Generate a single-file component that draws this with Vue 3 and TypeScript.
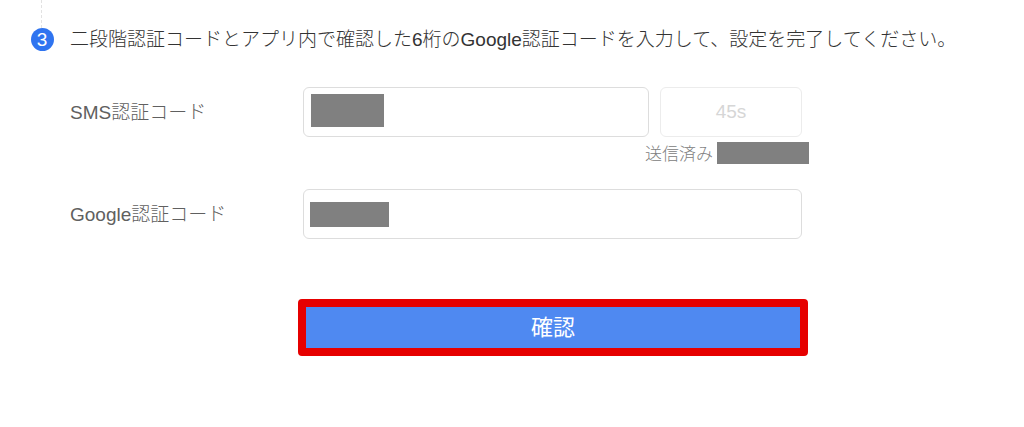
<script setup lang="ts">
import { ref } from 'vue'

const smsCode = ref('')
const googleCode = ref('')
const secondsLeft = ref(45)
</script>

<template>
  <main class="step">
    <div class="rail">
      <span class="rail-line"></span>
      <span class="badge">3</span>
    </div>
    <div class="content">
      <h2 class="title">二段階認証コードとアプリ内で確認した6桁のGoogle認証コードを入力して、設定を完了してください。</h2>
      <form class="form" @submit.prevent>
        <div class="row">
          <label class="label" for="sms-code">SMS認証コード</label>
          <div class="control">
            <div class="inline">
              <div class="field">
                <input id="sms-code" v-model="smsCode" class="input" type="text" autocomplete="off" />
                <span class="mask mask-sms"></span>
              </div>
              <button class="resend" type="button" disabled>{{ secondsLeft }}s</button>
            </div>
            <p class="note">送信済み<span class="note-mask"></span></p>
          </div>
        </div>
        <div class="row">
          <label class="label" for="google-code">Google認証コード</label>
          <div class="control field">
            <input id="google-code" v-model="googleCode" class="input" type="text" autocomplete="off" />
            <span class="mask mask-google"></span>
          </div>
        </div>
        <button class="submit" type="submit">確認</button>
      </form>
    </div>
  </main>
</template>

<style>
body {
  margin: 0;
  background: #fff;
}
</style>

<style scoped>
.step,
.step * {
  box-sizing: border-box;
}

.step {
  display: grid;
  grid-template-columns: 24px minmax(0, 1fr);
  column-gap: 16px;
  padding: 0 24px 72px 30px;
  font-family: "Liberation Sans", "Noto Sans CJK JP", sans-serif;
  font-size: 19px;
  font-weight: 300;
  color: #333;
}

.rail {
  display: flex;
  flex-direction: column;
  align-items: center;
}

.rail-line {
  height: 28px;
  margin-right: 2px;
  border-left: 1px dashed #e2e2e2;
}

.badge {
  display: flex;
  align-items: center;
  justify-content: center;
  width: 23px;
  height: 23px;
  border-radius: 50%;
  background: #2f74f0;
  color: #fff;
  font-size: 19px;
  font-weight: 400;
  line-height: 23px;
}

.title {
  margin: 24px 0 0;
  font-size: 19px;
  font-weight: 300;
  line-height: 32px;
}

.form {
  display: flex;
  flex-direction: column;
  max-width: 732px;
  margin-top: 31px;
}

.row {
  display: grid;
  grid-template-columns: 233px minmax(0, 1fr);
}

.label {
  line-height: 51px;
  color: #606060;
}

.inline {
  display: flex;
  gap: 11px;
}

.field {
  position: relative;
  flex: 1;
  height: 50px;
}

.input {
  display: block;
  width: 100%;
  height: 50px;
  padding: 0 12px;
  border: 1px solid #ddd;
  border-radius: 6px;
  background: #fff;
  color: #333;
  font: inherit;
  outline: none;
}

.mask {
  position: absolute;
  background: #808080;
  pointer-events: none;
}

.mask-sms {
  top: 7px;
  left: 8px;
  width: 73px;
  height: 33px;
}

.mask-google {
  top: 13px;
  left: 7px;
  width: 79px;
  height: 25px;
}

.resend {
  width: 142px;
  height: 50px;
  padding: 0;
  border: 1px solid #ececec;
  border-radius: 6px;
  background: #fff;
  color: #d6d6d6;
  font: inherit;
}

.note {
  display: flex;
  align-items: flex-start;
  justify-content: flex-end;
  gap: 4px;
  margin: 0 -7px 20px 0;
  padding: 5px 0 2px;
  color: #808080;
  font-size: 17px;
  line-height: 25px;
}

.note-mask {
  width: 92px;
  height: 22px;
  background: #808080;
}

.submit {
  height: 57px;
  margin: 59px -6px 0 228px;
  padding: 0;
  border: 8px solid #e60000;
  border-radius: 4px;
  background: #4f89f1;
  color: #fff;
  font: inherit;
  font-size: 22px;
  font-weight: 400;
  line-height: 40px;
}
</style>
